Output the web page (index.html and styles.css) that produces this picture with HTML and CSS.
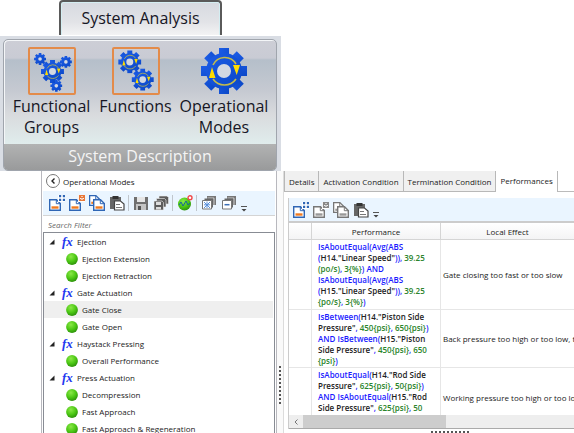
FILE: index.html
```html
<!DOCTYPE html>
<html lang="en">
<head>
<meta charset="utf-8">
<title>System Analysis</title>
<link rel="stylesheet" href="styles.css">
</head>
<body>
<svg class="defs" aria-hidden="true">
  <defs>
    <linearGradient id="blue" x1="0" y1="0" x2="1" y2="1"><stop offset="0" stop-color="#1c5ce6"/><stop offset="1" stop-color="#0b48c8"/></linearGradient>
    <radialGradient id="ball" cx=".4" cy=".3" r=".75"><stop offset="0" stop-color="#8be848"/><stop offset=".55" stop-color="#4cc814"/><stop offset="1" stop-color="#2a8c0a"/></radialGradient>
    <symbol id="gear" viewBox="-24 -24 48 48">
      <g fill="url(#blue)">
        <path d="M-5-23H5V23H-5z"/><path d="M-5-23H5V23H-5z" transform="rotate(45)"/><path d="M-23-5H23V5H-23z"/><path d="M-5-23H5V23H-5z" transform="rotate(-45)"/>
        <circle r="18"/>
      </g>
      <circle r="7" fill="#d3d8e2"/>
    </symbol>
    <symbol id="gear-cycle" viewBox="-24 -24 48 48">
      <use href="#gear" x="-24" y="-24" width="48" height="48"/>
      <path d="M-11-6A13 13 0 0 1 12-7M12 8A14 14 0 0 1-11 8" fill="none" stroke="#c4bb4a" stroke-width="1.600"/>
      <path d="M9-6H16L12.700 4zM-15 7H-8.500L-12-4z" fill="#ffdc00"/>
    </symbol>
    <symbol id="page" viewBox="0 0 12 12">
      <path d="M.7.7H7.5L11.3 4.5V11.3H.7z" fill="#fff" stroke="currentColor" stroke-width="1.4"/>
      <path d="M7.3.7V4.7H11.3" fill="none" stroke="currentColor"/>
      <path class="bar" d="M2.5 8.5H9.5" stroke-width="2.4"/>
    </symbol>
    <symbol id="add" viewBox="0 0 16 16"><use href="#page" x="0" y="4" width="12" height="12"/><path d="M9 0h7v7H9z" fill="#fff"/><path d="M10 0h6v6h-6z" fill="currentColor"/><path d="M13 0v6M10 3h6" stroke="#fff" stroke-width="1.600"/></symbol>
    <symbol id="remove" viewBox="0 0 16 16"><use href="#page" x="0" y="4" width="12" height="12"/><path d="M9 0h7v7H9z" fill="#fff"/><path class="mark" d="M10.500 .5h5v5h-5zM11 1l4 4m0-4l-4 4" fill="none" stroke-width="1.200"/></symbol>
    <symbol id="copy" viewBox="0 0 16 16"><use href="#page" x="0" y="0" width="11" height="11"/><use href="#page" x="4" y="4" width="12" height="12"/></symbol>
    <symbol id="paste" viewBox="0 0 16 16"><path d="M1 2h11v12H1z" fill="#666"/><path d="M3.500 1h6v3h-6z" fill="#333"/><path d="M5.500 6h6l3.500 3v6H5.500z" fill="#fff" stroke="#444" stroke-width="1.200"/><path d="M7 9.500h4M7 12.500h6" stroke="#777"/></symbol>
    <symbol id="save" viewBox="0 0 16 16"><path d="M1 2h14v13H1z" fill="#707070"/><path d="M4 2h8v5H4z" fill="#e6e6e6"/><path d="M3 9h10v6H3z" fill="#c4c4c4"/><path d="M5 11h3v4H5z" fill="#555"/></symbol>
    <symbol id="save-all" viewBox="0 0 16 16"><g fill="#5c5c5c" stroke="#eee" stroke-width=".6"><path d="M6 1h8l1.500 1.500V9H6z"/><path d="M3.500 3.500h8L13 5v7H3.500z"/><path d="M1 6h8l1.500 1.500V15H1z"/></g><path d="M3 7h5v3H3zM3 12h5v2.500H3z" fill="#ddd"/></symbol>
    <symbol id="new-mode" viewBox="0 0 16 16"><circle cx="7.500" cy="9" r="6.500" fill="url(#ball)"/><path d="M2 10l2-3 2 4 3-5 2 4 2-2" fill="none" stroke="#17659a"/><circle cx="13" cy="2.800" r="2" fill="#fff" stroke="#f04848" stroke-width="1.400"/></symbol>
    <symbol id="stack" viewBox="0 0 16 16"><path d="M6 1h9v9H6z" fill="#777"/><path d="M6.500 3h6.500v7" fill="none" stroke="#ddd" stroke-width=".8"/><path d="M3.500 3.500h8.500v9H3.500z" fill="#666"/><path d="M1.500 5.500H10.500v8.500h-9z" fill="#fff" stroke="#777"/></symbol>
    <symbol id="expand" viewBox="0 0 16 16"><use href="#stack"/><path d="M3 7l6 6m0-6l-6 6M6 6.500v6.500M3 9.800h6" stroke="#5a92dc" stroke-width="1"/></symbol>
    <symbol id="collapse" viewBox="0 0 16 16"><use href="#stack"/><path d="M3.500 9.700h5" stroke="#3a6eb5" stroke-width="1.500"/></symbol>
    <symbol id="more" viewBox="0 0 6 6"><path d="M0 .5h6" stroke="#555"/><path d="M.5 3h5L3 5.500z" fill="#444"/></symbol>
    <symbol id="dot" viewBox="0 0 12 12"><circle cx="6" cy="6" r="5.900" fill="url(#ball)"/></symbol>
    <symbol id="twisty" viewBox="0 0 6 6"><path d="M5.500 .5V5.500H.5z" fill="#222"/></symbol>
  </defs>
</svg>

<header class="ribbon">
  <button class="ribbon-tab">System Analysis</button>
  <div class="ribbon-body">
    <section class="group">
      <div class="group-items">
        <button class="tool"><svg class="framed" viewBox="0 0 46 46"><use href="#gear" x="4" y="4" width="13" height="13"/><use href="#gear" x="31" y="7" width="13" height="13"/><use href="#gear" x="21" y="32" width="13" height="13"/><use href="#gear-cycle" x="11" y="11" width="25" height="25"/></svg><span>Functional Groups</span></button>
        <button class="tool"><svg class="framed" viewBox="0 0 46 46"><use href="#gear-cycle" x="4" y="1" width="25" height="25"/><use href="#gear-cycle" x="18" y="20" width="24" height="24"/></svg><span>Functions</span></button>
        <button class="tool"><svg viewBox="0 0 48 48"><use href="#gear-cycle" width="48" height="48"/></svg><span>Operational Modes</span></button>
      </div>
      <h2 class="group-name">System Description</h2>
    </section>
  </div>
</header>

<main class="work">
  <section class="modes">
    <div class="modes-head">
      <button class="back" aria-label="Back"><svg viewBox="0 0 14 14"><circle cx="7" cy="7" r="6.500" fill="#fff" stroke="#777"/><path d="M8.500 4.500L6 7l2.500 2.500" fill="none" stroke="#222" stroke-width="1.400"/></svg></button>
      <h3>Operational Modes</h3>
    </div>
    <div class="toolbar" role="toolbar">
      <div class="set">
        <button aria-label="Add"><svg><use href="#add"/></svg></button>
        <button aria-label="Remove"><svg><use href="#remove"/></svg></button>
        <button aria-label="Copy"><svg><use href="#copy"/></svg></button>
        <button aria-label="Paste"><svg><use href="#paste"/></svg></button>
      </div>
      <div class="set">
        <button aria-label="Save"><svg><use href="#save"/></svg></button>
        <button aria-label="Save all"><svg><use href="#save-all"/></svg></button>
      </div>
      <div class="set">
        <button aria-label="New mode"><svg><use href="#new-mode"/></svg></button>
      </div>
      <div class="set">
        <button aria-label="Expand all"><svg><use href="#expand"/></svg></button>
        <button aria-label="Collapse all"><svg><use href="#collapse"/></svg></button>
      </div>
      <button class="more" aria-label="More"><svg><use href="#more"/></svg></button>
    </div>
    <input class="search" type="text" placeholder="Search Filter" aria-label="Search Filter">
    <ul class="tree">
      <li><div class="row"><svg class="twisty"><use href="#twisty"/></svg><i class="fx">fx</i>Ejection</div>
        <ul><li class="row"><svg class="dot"><use href="#dot"/></svg>Ejection Extension</li><li class="row"><svg class="dot"><use href="#dot"/></svg>Ejection Retraction</li></ul></li>
      <li><div class="row"><svg class="twisty"><use href="#twisty"/></svg><i class="fx">fx</i>Gate Actuation</div>
        <ul><li class="row selected"><svg class="dot"><use href="#dot"/></svg>Gate Close</li><li class="row"><svg class="dot"><use href="#dot"/></svg>Gate Open</li></ul></li>
      <li><div class="row"><svg class="twisty"><use href="#twisty"/></svg><i class="fx">fx</i>Haystack Pressing</div>
        <ul><li class="row"><svg class="dot"><use href="#dot"/></svg>Overall Performance</li></ul></li>
      <li><div class="row"><svg class="twisty"><use href="#twisty"/></svg><i class="fx">fx</i>Press Actuation</div>
        <ul><li class="row"><svg class="dot"><use href="#dot"/></svg>Decompression</li><li class="row"><svg class="dot"><use href="#dot"/></svg>Fast Approach</li><li class="row"><svg class="dot"><use href="#dot"/></svg>Fast Approach &amp; Regeneration</li></ul></li>
    </ul>
  </section>

  <div class="splitter"><span class="grip"></span></div>

  <section class="detail">
    <nav class="tabs">
      <button>Details</button><button>Activation Condition</button><button>Termination Condition</button><button class="active">Performances</button>
    </nav>
    <div class="panel">
      <div class="toolbar" role="toolbar">
        <div class="set">
          <button aria-label="Add"><svg><use href="#add"/></svg></button>
          <button class="off" aria-label="Remove"><svg><use href="#remove"/></svg></button>
          <button class="off" aria-label="Copy"><svg><use href="#copy"/></svg></button>
          <button aria-label="Paste"><svg><use href="#paste"/></svg></button>
        </div>
        <button class="more" aria-label="More"><svg><use href="#more"/></svg></button>
      </div>
      <div class="grid">
        <table>
          <colgroup><col class="c-mark"><col class="c-perf"><col></colgroup>
          <thead><tr><th></th><th>Performance</th><th>Local Effect</th></tr></thead>
          <tbody>
            <tr><td></td><td class="expr">IsAboutEqual(Avg(ABS<br>(<b>H14."Linear Speed"</b>)), <em>39.25</em><br><em>(po/s)</em>, <em>3{%}</em>) AND<br>IsAboutEqual(Avg(ABS<br>(<b>H15."Linear Speed"</b>)), <em>39.25</em><br><em>{po/s}</em>, <em>3{%}</em>)</td><td>Gate closing too fast or too slow</td></tr>
            <tr><td></td><td class="expr">IsBetween(<b>H14."Piston Side<br>Pressure"</b>, <em>450{psi}</em>, <em>650{psi}</em>)<br>AND IsBetween(<b>H15."Piston<br>Side Pressure"</b>, <em>450{psi}</em>, <em>650</em><br><em>{psi}</em>)</td><td>Back pressure too high or too low, t</td></tr>
            <tr><td></td><td class="expr">IsAboutEqual(<b>H14."Rod Side<br>Pressure"</b>, <em>625{psi}</em>, <em>50{psi}</em>)<br>AND IsAboutEqual(<b>H15."Rod<br>Side Pressure"</b>, <em>625{psi}</em>, <em>50</em></td><td>Working pressure too high or too lo</td></tr>
          </tbody>
        </table>
      </div>
      <div class="scroll"><button aria-label="Scroll left"><svg viewBox="0 0 6 8"><path d="M4.500 1.500L2 4l2.500 2.500" fill="none" stroke="#777"/></svg></button><span class="thumb"></span></div>
    </div>
    <div class="foot"><span class="grip flat"></span></div>
  </section>
</main>
</body>
</html>
```
FILE: styles.css
```css
* { box-sizing: border-box; }
body {
  margin: 0;
  height: 100vh;
  overflow: hidden;
  display: flex;
  flex-direction: column;
  background: #fff;
  color: #222;
  font: 8px/11px "Open Sans", "Noto Sans", sans-serif;
}
button { margin: 0; padding: 0; border: 0; background: none; font: inherit; color: inherit; }
h2, h3 { margin: 0; font: inherit; }
ul { margin: 0; padding: 0; list-style: none; }
svg { display: block; flex: none; }
.defs { position: absolute; width: 0; height: 0; }

/* Ribbon */
.ribbon { align-self: flex-start; display: flex; flex-direction: column; flex: none; font-size: 16px; line-height: 21px; color: #161625; }
.ribbon-tab {
  align-self: flex-start;
  width: 163px;
  height: 35px;
  margin: 0 0 1px 59px;
  border: solid #5a5a5a;
  border-width: 2px 2px 0;
  border-radius: 4px 4px 0 0;
  background: linear-gradient(#d6d9e0, #e2e3e7 60%, #f3f3f4);
  box-shadow: inset 1px 1px #d4eef2, inset -1px 0 #d4eef2;
}
.ribbon-body { padding: 3px 4px 0 3px; background: #d9dde4; }
.group {
  border: 1px solid #a0a5ad;
  border-radius: 5px;
  overflow: hidden;
  box-shadow: inset 1px 1px #f4f6f8;
  background: linear-gradient(#cdced6 0, #c9cbd4 18px, #b5bfca 20px, #c5c9d1 50px, #d9dbde 75px, #e0eded 105px);
}
.group-items { display: flex; padding: 7px 7px 0; height: 104px; gap: 4px; }
.tool { display: flex; flex-direction: column; align-items: center; gap: 1px; width: 81px; }
.tool:nth-child(2) { width: 79px; }
.tool:nth-child(3) { width: 90px; }
.tool svg { width: 48px; height: 48px; }
.tool .framed { border: 2px solid #e38b4a; border-radius: 2px; }
.group-name { height: 26px; line-height: 25px; text-align: center; color: #f4f4f4; background: linear-gradient(#b2b3b3, #999a9b); }

/* Work area */
.work { flex: 1; min-height: 0; display: flex; margin-left: 41px; }
.modes { flex: 0 0 236px; display: flex; flex-direction: column; padding: 0 1px; border: solid #b8b8be; border-width: 0 1px; }
.modes-head { height: 20px; display: flex; align-items: center; gap: 3px; padding-left: 3px; }
.back svg { width: 14px; height: 14px; }
.toolbar { flex: none; height: 24px; display: flex; align-items: center; padding-left: 2px; background: #eaf5ff; }
.set { display: flex; padding: 0 1px 0 2px; }
.set + .set { border-left: 1px solid #c0c6cc; }
.set button { width: 20px; display: grid; place-items: center; color: #2f66b5; --bar: #f07a20; --mark: #e87838; }
.set .off { color: #777; --bar: #999; --mark: #888; }
.set svg { width: 16px; height: 16px; }
.bar { stroke: var(--bar); }
.mark { stroke: var(--mark); }
.more { align-self: flex-end; padding: 0 0 3px 1px; }
.more svg { width: 6px; height: 6px; }
.search { height: 17px; margin: 0; padding: 0 5px; border: 1px solid #d4d4d4; border-width: 1px 0 0; font: italic 8px/11px "Open Sans", sans-serif; }
.search::placeholder { color: #666; opacity: 1; }
.tree { flex: 1; min-height: 0; overflow: hidden; border: solid #888c94; border-width: 1px 1px 0; }
.row { display: flex; align-items: center; height: 17px; margin-right: 1px; padding-left: 5px; white-space: nowrap; }
.row.selected { background: #efefef; }
.twisty { width: 6px; height: 6px; margin-right: 7px; }
.fx { width: 15px; font: italic bold 13px/15px "Liberation Serif", serif; color: #2338f0; }
.dot { width: 12px; height: 12px; margin: 0 4px 0 17px; }

.splitter { flex: 0 0 7px; display: flex; align-items: center; justify-content: center; padding-top: 166px; border-right: 1px solid #dcdcdc; background: #fafafa; }
.grip { width: 2px; height: 38px; background: repeating-linear-gradient(#555 0 2px, transparent 2px 4px); }
.grip.flat { width: 38px; height: 2px; background: repeating-linear-gradient(90deg, #555 0 2px, transparent 2px 4px); }

/* Detail pane */
.detail { flex: 1; min-width: 0; display: flex; flex-direction: column; }
.tabs { flex: none; height: 21px; display: flex; box-shadow: inset 0 -1px #bbb; }
.tabs button { padding: 0 4px; border: solid #b8b8b8; border-width: 0 1px 1px 0; background: #f0f0f0; white-space: nowrap; }
.tabs button:first-child { border-left-width: 1px; }
.tabs .active { background: #fff; border-bottom: 0; padding-bottom: 2px; }
.panel { flex: 1; min-height: 0; display: flex; flex-direction: column; margin: 6px 0 0 4px; border-left: 1px solid #ccc; }
.panel .toolbar { height: 23px; padding-left: 0; }
.grid { flex: 1; min-height: 0; overflow: hidden; border-top: 2px solid #ccc; }
table { width: 100%; table-layout: fixed; border-collapse: separate; border-spacing: 0; }
.c-mark { width: 23px; }
.c-perf { width: 129px; }
th { height: 17px; padding: 0; font-weight: 400; background: linear-gradient(#fff, #f4f4f5); border: solid #d5d5d5; border-width: 0 1px 1px 0; }
td { padding: 0 0 0 2px; border: solid #e6e6e6; border-width: 0 1px 1px 0; white-space: nowrap; overflow: hidden; height: 58px; }
th:last-child, td:last-child { border-right: 0; }
tbody tr:first-child td { height: 70px; }
tbody tr:last-child td { height: 60px; }
td.expr { padding: 1px 0 0 6px; vertical-align: top; color: #1a1aff; font-weight: 600; }
.expr b { color: #222; font-weight: 600; }
.expr em { color: #2a842a; font-style: normal; }
.scroll { flex: none; height: 14px; display: flex; background: #eee; border-bottom: 1px solid #aaa; }
.scroll button { width: 14px; display: grid; place-items: center; }
.scroll svg { width: 6px; height: 8px; }
.thumb { width: 143px; background: #cdcdcd; }
.foot { flex: none; height: 4px; padding-top: 2px; display: flex; justify-content: center; padding-left: 42px; }
```
